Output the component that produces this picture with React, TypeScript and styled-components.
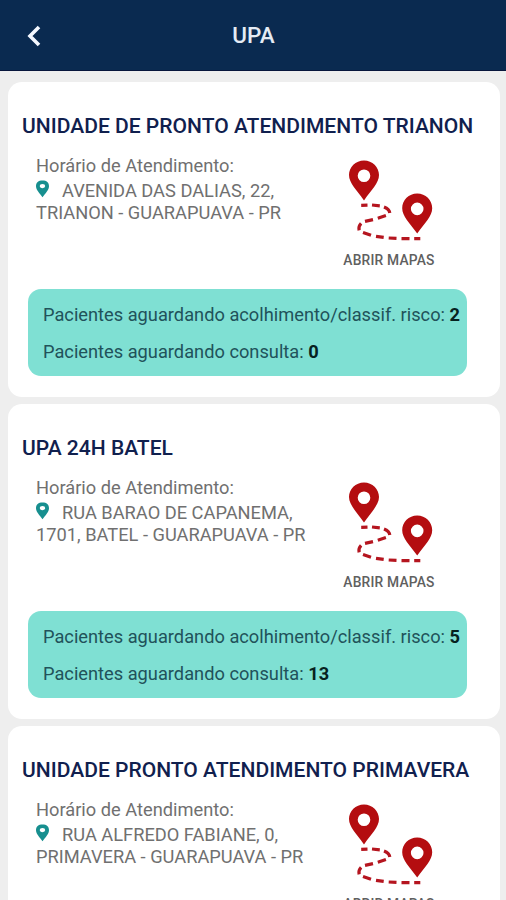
import React from "react";
import styled, { createGlobalStyle } from "styled-components";

const GlobalStyle = createGlobalStyle`
  * { box-sizing: border-box; }
  body {
    margin: 0;
    background: #eeeeee;
    font-family: Roboto, "Liberation Sans", sans-serif;
  }
`;

const Screen = styled.div`
  width: 506px;
  height: 900px;
  overflow: hidden;
  background: #eeeeee;
`;

const Header = styled.header`
  display: grid;
  grid-template-columns: 68px 1fr 67px;
  align-items: center;
  height: 71px;
  background: #0a2a50;
  border-bottom: 1px solid #08163c;
`;

const BackButton = styled.button`
  display: flex;
  justify-content: center;
  padding: 2px 0 0;
  border: 0;
  background: none;
`;

const HeaderTitle = styled.h1`
  margin: 0;
  text-align: center;
  color: #e4ebf5;
  font-size: 22.5px;
  font-weight: 500;
  line-height: 26px;
`;

const CardList = styled.main`
  display: flex;
  flex-direction: column;
  gap: 7px;
  padding: 11px 6.5px 0 8px;
`;

const Card = styled.article`
  flex: none;
  height: 315px;
  padding: 31px 14px 0;
  border-radius: 14px;
  background: #ffffff;
`;

const CardTitle = styled.h2`
  margin: 0;
  color: #10204e;
  font-size: 21.05px;
  font-weight: 500;
  line-height: 25px;
  white-space: nowrap;
`;

const Info = styled.div`
  display: flex;
  height: 151px;
  padding: 17px 0 0 14px;
`;

const Details = styled.div`
  width: 300px;
  color: #707070;
  font-size: 18.25px;
  line-height: 22px;
  white-space: nowrap;
`;

const Hours = styled.div`
  height: 25px;
`;

const AddressLine = styled.div`
  display: flex;
  height: 21.5px;
`;

const PinSlot = styled.span`
  width: 26px;
  line-height: 0;
`;

const MapButton = styled.button`
  display: flex;
  flex-direction: column;
  align-items: center;
  width: 106px;
  height: 120px;
  margin-top: 4px;
  padding: 0;
  border: 0;
  background: none;
  color: #606060;
  font: 500 13.8px/16px Roboto, sans-serif;
  letter-spacing: 0.2px;
  white-space: nowrap;
`;

const MapLabel = styled.span`
  margin-top: 8.5px;
`;

const Queue = styled.section`
  display: flex;
  flex-direction: column;
  gap: 14.5px;
  width: 439px;
  height: 87px;
  margin-left: 6px;
  padding: 15px 0 0 15px;
  border-radius: 13px;
  background: #7fe0d3;
  color: #21525a;
  font-size: 18.25px;
  line-height: 22px;
  white-space: nowrap;
`;

const Count = styled.strong`
  color: #06221f;
  font-weight: 700;
`;

const BackIcon = () => (
  <svg width="16" height="22" viewBox="0 0 16 22" fill="none">
    <path d="M13 2 L4 11 L13 20" stroke="#f4f8ff" strokeWidth="3.6" />
  </svg>
);

const PlaceIcon = () => (
  <svg width="13" height="18" viewBox="0 0 13 18">
    <path
      fill="#178f8f"
      fillRule="evenodd"
      d="M6.5 .5C2.4 .5 0 2.5 0 6.3 0 9.9 3.5 13.2 6.5 17.2 9.5 13.2 13 9.9 13 6.3 13 2.5 10.6 .5 6.5 .5ZM6.5 4a2.7 2.1 0 1 1 0 4.2 2.7 2.1 0 0 1 0-4.2Z"
    />
  </svg>
);

const PIN =
  "M15 0C6.6 0 0 6.5 0 14.7 0 22.5 7.5 29.5 15 40 22.5 29.5 30 22.5 30 14.7 30 6.5 23.4 0 15 0ZM15 9a6.3 6.3 0 1 1 0 12.6A6.3 6.3 0 0 1 15 9Z";

const RouteIcon = () => (
  <svg width="92" height="84" viewBox="0 0 92 84">
    <g fill="#b40d10" fillRule="evenodd">
      <path transform="translate(6 1.4)" d={PIN} />
      <path transform="translate(59.2 34.6)" d={PIN} />
    </g>
    <g fill="none" stroke="#b5151f" strokeWidth="3.2">
      <path d="M18.2 46.4L24.5 46.2M29 46L36.8 46.8M41 48Q46.3 50 46.8 54M42.9 56.6L34.8 59.3M30 60.6L22 62.4M18.1 64.4Q15.1 67.5 16.1 71.4M20 73.5L28 76.3M33 77.3L40.7 78.4M45.7 79L53.5 79.4M58.5 79.6L66.5 79.7M71.2 79.7L77.3 79.7" />
    </g>
  </svg>
);

interface Unit {
  name: string;
  address: [string, string];
  queue?: { reception: number; consultation: number };
}

const units: Unit[] = [
  {
    name: "UNIDADE DE PRONTO ATENDIMENTO TRIANON",
    address: ["AVENIDA DAS DALIAS, 22,", "TRIANON - GUARAPUAVA - PR"],
    queue: { reception: 2, consultation: 0 },
  },
  {
    name: "UPA 24H BATEL",
    address: ["RUA BARAO DE CAPANEMA,", "1701, BATEL - GUARAPUAVA - PR"],
    queue: { reception: 5, consultation: 13 },
  },
  {
    name: "UNIDADE PRONTO ATENDIMENTO PRIMAVERA",
    address: ["RUA ALFREDO FABIANE, 0,", "PRIMAVERA - GUARAPUAVA - PR"],
  },
];

const UnitCard = ({ unit }: { unit: Unit }) => (
  <Card>
    <CardTitle>{unit.name}</CardTitle>
    <Info>
      <Details>
        <Hours>Horário de Atendimento:</Hours>
        <AddressLine>
          <PinSlot>
            <PlaceIcon />
          </PinSlot>
          {unit.address[0]}
        </AddressLine>
        <AddressLine>{unit.address[1]}</AddressLine>
      </Details>
      <MapButton>
        <RouteIcon />
        <MapLabel>ABRIR MAPAS</MapLabel>
      </MapButton>
    </Info>
    {unit.queue && (
      <Queue>
        <div>
          Pacientes aguardando acolhimento/classif. risco: <Count>{unit.queue.reception}</Count>
        </div>
        <div>
          Pacientes aguardando consulta: <Count>{unit.queue.consultation}</Count>
        </div>
      </Queue>
    )}
  </Card>
);

export default function App() {
  return (
    <Screen>
      <GlobalStyle />
      <Header>
        <BackButton aria-label="Voltar">
          <BackIcon />
        </BackButton>
        <HeaderTitle>UPA</HeaderTitle>
      </Header>
      <CardList>
        {units.map((unit) => (
          <UnitCard key={unit.name} unit={unit} />
        ))}
      </CardList>
    </Screen>
  );
}
